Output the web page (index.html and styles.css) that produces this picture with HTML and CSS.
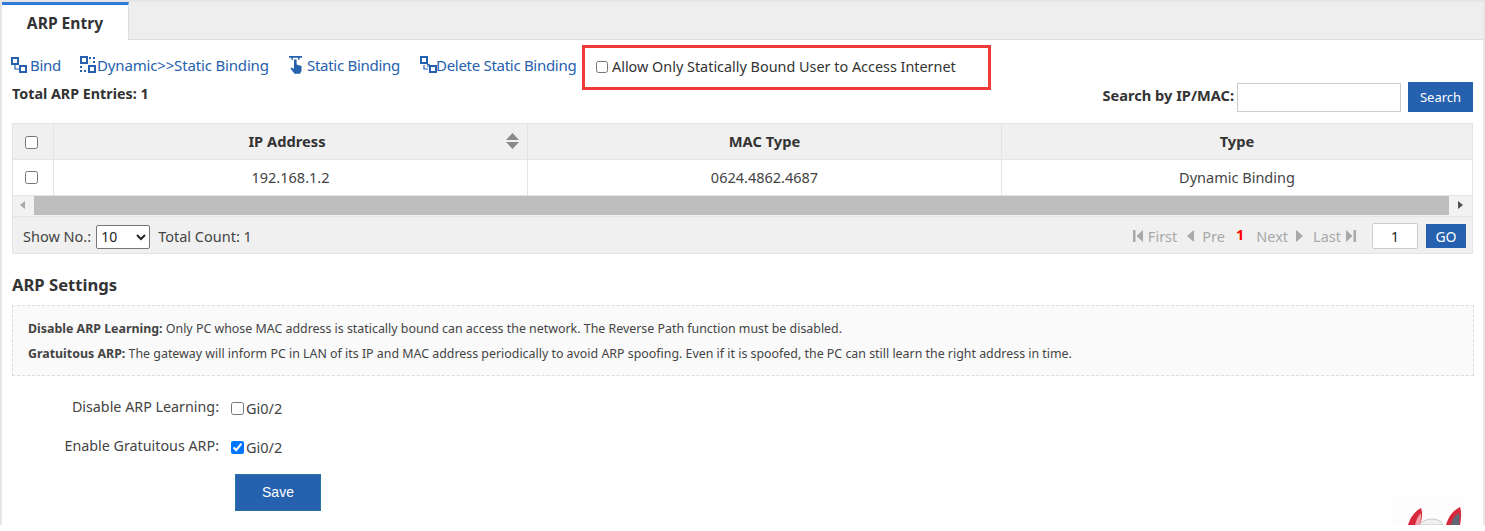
FILE: index.html
```html
<!DOCTYPE html>
<html lang="en">
<head>
<meta charset="utf-8">
<title>ARP Entry</title>
<link rel="stylesheet" href="styles.css">
</head>
<body>
<div class="page">
  <div class="tabs"><div class="tab">ARP Entry</div></div>
  <div class="content">
    <div class="toolbar">
      <a class="tool t-bind"><svg class="ico" width="18" height="18" viewBox="0 0 18 18"><rect x="2" y="2" width="6" height="6" fill="none" stroke="#2561ae" stroke-width="2"/><rect x="10" y="10" width="6" height="6" fill="none" stroke="#2561ae" stroke-width="2"/><path d="M5 8v5h4" fill="none" stroke="#2561ae" stroke-width="1.200"/></svg>Bind</a>
      <a class="tool t-dyn"><svg class="ico" width="18" height="18" viewBox="0 0 18 18"><rect x="2" y="1" width="6" height="6" fill="none" stroke="#2561ae" stroke-width="2"/><rect x="10" y="10" width="6" height="6" fill="none" stroke="#2561ae" stroke-width="2"/><path d="M10 1h2v2h-2zM14 1h2v2h-2zM14 5h2v2h-2zM1 10h2v2H1zM1 14h2v2H1zM5 14h2v2H5z" fill="#2561ae"/></svg>Dynamic&gt;&gt;Static Binding</a>
      <a class="tool t-static"><svg class="ico" width="14" height="18" viewBox="0 0 14 18"><path d="M0 0h13v1.800h-2.500v2H9V1.800H4v2H2.500v-2H0z" fill="#2561ae"/><path d="M5 3.500h2.600v5l4.900 1.400V15l-1.500 2.800H5.500L1.500 12.500l1-1L5 13z" fill="#2561ae"/></svg><span>Static Binding</span></a>
      <a class="tool t-del"><svg class="ico" width="18" height="18" viewBox="0 0 18 18"><rect x="2" y="1" width="6" height="6" fill="none" stroke="#2561ae" stroke-width="2"/><rect x="11" y="10" width="6" height="6" fill="none" stroke="#2561ae" stroke-width="2"/><path d="M8 8l2.500 2.500M10.500 8L8 10.500M5 9v4h4" fill="none" stroke="#2561ae" stroke-width="1.200"/></svg>Delete Static Binding</a>
      <label class="allow"><input type="checkbox">Allow Only Statically Bound User to Access Internet</label>
    </div>
    <div class="summary">
      <div class="total">Total ARP Entries: 1</div>
      <div class="search">
        <span class="search-label">Search by IP/MAC:</span>
        <input class="search-input" type="text">
        <button class="btn search-btn">Search</button>
      </div>
    </div>
    <div class="grid">
      <div class="row head">
        <div class="cell c0"><input type="checkbox"></div>
        <div class="cell c1 sortable">IP Address<svg class="sort" width="13" height="18" viewBox="0 0 13 18"><path d="M6.500 1L13 8H0zM0 10h13l-6.500 7z" fill="#8a8a8a"/></svg></div>
        <div class="cell c2">MAC Type</div>
        <div class="cell c3">Type</div>
      </div>
      <div class="row body">
        <div class="cell c0"><input type="checkbox"></div>
        <div class="cell c1">192.168.1.2</div>
        <div class="cell c2">0624.4862.4687</div>
        <div class="cell c3">Dynamic Binding</div>
      </div>
      <div class="hscroll">
        <span class="arrow left"></span>
        <span class="thumb"></span>
        <span class="arrow right"></span>
      </div>
      <div class="pager">
        <div class="pager-left">
          <span>Show No.:</span>
          <select class="size"><option>10</option></select>
          <span class="count">Total Count: 1</span>
        </div>
        <div class="pager-right">
          <span class="pg first"><svg width="10" height="12" viewBox="0 0 10 12"><path d="M0 0h2.500v12H0zM10 0v12L3.500 6z" fill="#a9a9a9"/></svg>First</span>
          <span class="pg wide"><svg width="7" height="12" viewBox="0 0 7 12"><path d="M7 0v12L0 6z" fill="#a9a9a9"/></svg>Pre</span>
          <span class="cur">1</span>
          <span class="pg wide">Next<svg width="7" height="12" viewBox="0 0 7 12"><path d="M0 0v12l7-6z" fill="#a9a9a9"/></svg></span>
          <span class="pg first">Last<svg width="10" height="12" viewBox="0 0 10 12"><path d="M0 0v12l6.500-6zM7.500 0H10v12H7.500z" fill="#a9a9a9"/></svg></span>
          <input class="goto" type="text" value="1">
          <button class="btn go">GO</button>
        </div>
      </div>
    </div>
    <h3 class="section">ARP Settings</h3>
    <div class="note">
      <p><b>Disable ARP Learning:</b> Only PC whose MAC address is statically bound can access the network. The Reverse Path function must be disabled.</p>
      <p><b>Gratuitous ARP:</b> The gateway will inform PC in LAN of its IP and MAC address periodically to avoid ARP spoofing. Even if it is spoofed, the PC can still learn the right address in time.</p>
    </div>
    <div class="form-row">
      <span class="form-label">Disable ARP Learning:</span>
      <label class="port"><input type="checkbox">Gi0/2</label>
    </div>
    <div class="form-row second">
      <span class="form-label">Enable Gratuitous ARP:</span>
      <label class="port"><input type="checkbox" checked>Gi0/2</label>
    </div>
    <button class="btn save">Save</button>
  </div>
  <svg class="mascot" width="74" height="28" viewBox="0 0 74 28"><rect width="74" height="28" fill="#fdfdfd"/><path d="M17 28c2-7 6-13 13-17 2 5 1 11-1 17z" fill="#d8283c"/><path d="M24 28c1-5 3-9 6-12 0 4 0 8-1 12z" fill="#f4a0aa"/><path d="M55 28c2-7 6-14 14-18 2 6 1 12 0 18z" fill="#d8283c"/><path d="M60 28c1-5 3-9 8-12 1 4 0 8 0 12z" fill="#5f6975"/><path d="M28 28c3-4 8-6 13-6s9 2 11 6z" fill="#efefef" stroke="#bdbdbd" stroke-width=".8"/></svg>
  <div class="callout"></div>
</div>
</body>
</html>
```
FILE: styles.css
```css
* { box-sizing: border-box; }
html, body { margin: 0; padding: 0; background: #fff; }
body { font-family: "Noto Sans", "Open Sans", "Liberation Sans", sans-serif; font-size: 14.500px; color: #444; }
.page { position: relative; width: 1485px; height: 525px; border-left: 2px solid #e6e6e6; border-right: 2px solid #e6e6e6; border-top: 2px solid #e6e6e6; overflow: hidden; }
.tabs { height: 38px; background: #eee; border-bottom: 1px solid #ddd; }
.tab { width: 127px; height: 38px; background: #fff; border-top: 3px solid #2f7bd9; border-right: 1px solid #ddd; font-weight: 700; font-size: 15.600px; color: #333; text-align: center; line-height: 37px; }
.content { padding: 0 10px; }
.toolbar { display: flex; align-items: center; height: 50px; color: #2561ae; font-size: 15px; }
.tool { display: flex; align-items: center; white-space: nowrap; letter-spacing: -0.290px; }
.ico { flex: none; }
.t-bind { width: 69px; margin-left: -2px; }
.t-bind .ico { margin-right: 2px; }
.t-dyn { width: 210px; letter-spacing: -0.160px; }
.t-static { width: 130px; }
.t-static .ico { margin-right: 4px; }
.t-del { width: 164px; }
.t-del .ico { margin-right: -1px; }
.allow { display: flex; align-items: center; margin-left: 10px; color: #333; white-space: nowrap; padding-top: 3px; font-size: 14.400px; }
.allow input { width: 12px; height: 12px; margin: 0 4px 0 3px; }
.summary { display: flex; justify-content: space-between; height: 33px; }
.total { font-weight: 700; color: #333; margin-top: -6px; line-height: 20px; font-size: 14.300px; }
.search { display: flex; align-items: flex-start; }
.search-label { font-weight: 700; color: #333; line-height: 28px; margin-top: -9px; font-size: 14.600px; margin-right: 3px; }
.search-input { width: 164px; height: 29px; margin-top: -7px; border: 1px solid #ccc; background: #fff; }
.btn { background: #2561ae; color: #fff; border: 0; font-family: "Noto Sans", "Open Sans", sans-serif; padding: 0; }
.search-btn { width: 65px; height: 30px; margin-top: -8px; margin-left: 7px; font-size: 13px; }
.grid { width: 1461px; border: 1px solid #e4e4e4; }
.row { display: grid; grid-template-columns: 41px 474px 474px 1fr; }
.row.head { height: 36px; background: #f0f0f0; border-bottom: 1px solid #e4e4e4; font-weight: 700; color: #333; font-size: 14.700px; }
.row.body { height: 35px; background: #fff; color: #444; }
.cell { display: flex; align-items: center; justify-content: center; position: relative; border-right: 1px solid #e4e4e4; padding-bottom: 2px; }
.cell.c3 { border-right: 0; }
.cell.sortable { padding-right: 7px; }
.cell input { width: 13px; height: 13px; margin: 2px 3px 0 0; }
.head .cell input { margin-top: 4px; }
.sort { position: absolute; right: 8px; top: 8px; }
.hscroll { display: flex; align-items: flex-start; height: 21px; background: #f2f2f2; border-top: 1px solid #e4e4e4; }
.arrow { flex: none; width: 21px; height: 100%; position: relative; }
.arrow::after { content: ""; position: absolute; top: 5px; border-style: solid; border-width: 4.500px 5px; border-color: transparent; }
.arrow.left::after { left: 7px; border-right-color: #a8a8a8; border-left-width: 0; }
.arrow.right { width: 23px; }
.arrow.right::after { left: 9px; border-left-color: #505050; border-right-width: 0; }
.thumb { flex: 1; height: 19px; background: #bebebe; }
.pager { display: flex; justify-content: space-between; align-items: center; height: 37px; background: #f0f0f0; border-top: 1px solid #e4e4e4; padding: 1px 6px 0 10px; }
.pager-left { display: flex; align-items: center; color: #444; }
.size { width: 54px; height: 24px; margin: 2px 8px 0 5px; font-family: "Noto Sans", sans-serif; font-size: 14px; background: #fff; border: 1px solid #767676; border-radius: 2px; color: #222; }
.pager-right { display: flex; align-items: center; color: #a9a9a9; }
.pg { display: inline-flex; align-items: center; margin-right: 10px; }
.pg.first { gap: 5px; }
.pg.wide { gap: 8px; }
.cur { color: #f00; font-weight: 700; margin: -3px 12px 0 1px; }
.goto { width: 46px; height: 26px; margin: 1px 8px 0 6px; border: 1px solid #ccc; border-radius: 2px; background: #fff; text-align: center; font-size: 14px; font-family: "Noto Sans", sans-serif; color: #222; }
.go { width: 40px; height: 24px; font-size: 14px; margin-top: 1px; }
.section { margin: 20px 0 9px; font-size: 16.600px; line-height: 22px; color: #333; font-weight: 700; }
.note { width: 1462px; height: 71px; border: 1px dashed #ddd; background: #fafafa; padding: 12px 15px; font-size: 12.400px; color: #444; }
.note p { margin: 0 0 4px; line-height: 21px; }
.note b { color: #444; }
.form-row { display: flex; align-items: center; margin-top: 19px; height: 26px; }
.form-row.second { margin-top: 13px; }
.form-label { width: 207px; text-align: right; color: #444; margin-top: -3px; font-size: 14.300px; }
.port { display: flex; align-items: center; margin-left: 12px; color: #444; }
.port input { width: 13px; height: 13px; margin: 1px 2px 0 0; }
.save { display: block; width: 86px; height: 37px; margin: 14px 0 0 223px; padding-bottom: 2px; font-family: "Liberation Sans", sans-serif; font-size: 14px; border: 1px solid #2a72a8; }
.mascot { position: absolute; right: 18px; bottom: 0; }
.callout { position: absolute; left: 580px; top: 43px; width: 409px; height: 45px; border: 3px solid #f03a3a; }
```
